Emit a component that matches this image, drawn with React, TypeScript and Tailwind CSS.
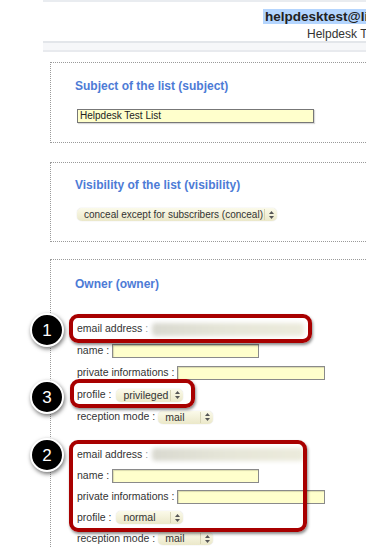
import React from 'react';

function Select({ text, width, size = 'text-[10.5px]' }: { text: string; width: string; size?: string }) {
  return (
    <div
      className={`${width} ${size} h-[13px] flex items-center rounded-[5px] bg-gradient-to-b from-[#fbfaea] to-[#ebe8c9] shadow-[0_0_1px_rgba(0,0,0,0.25)] leading-[13px] text-[#333]`}
    >
      <span className="flex-1 pl-[7px] whitespace-nowrap overflow-hidden">{text}</span>
      <span className="w-[13px] h-[11px] border-l border-[#d6d3b4] flex items-center justify-center">
        <svg width="5" height="8" viewBox="0 0 5 8">
          <path d="M2.5 0 L5 3 L0 3 Z" fill="#555" />
          <path d="M2.5 8 L5 5 L0 5 Z" fill="#555" />
        </svg>
      </span>
    </div>
  );
}

function TextInput({ width }: { width: string }) {
  return (
    <div
      className={`${width} h-[14px] border border-[#8a8a8a] bg-[#ffffcc] shadow-[inset_1px_1px_1px_rgba(0,0,0,0.15)]`}
    />
  );
}

function BlurValue() {
  return (
    <div className="ml-[4px] w-[152px] h-[13px] rounded-[4px] bg-gradient-to-r from-[#d9d9d0] via-[#e6e6d8] to-[#ecebdc] blur-[2px]" />
  );
}

function OwnerRows({ profile, rowHeight }: { profile: string; rowHeight: string }) {
  return (
    <div className="flex flex-col">
      <div className={`${rowHeight} flex items-center`}>
        <span>email address</span>
        <span className="text-[#999]">&nbsp;:</span>
        <BlurValue />
      </div>
      <div className={`${rowHeight} flex items-center gap-[3px]`}>
        <span>name :</span>
        <TextInput width="w-[147px]" />
      </div>
      <div className={`${rowHeight} flex items-center gap-[3px]`}>
        <span>private informations :</span>
        <TextInput width="w-[148px]" />
      </div>
      <div className={`${rowHeight} flex items-center gap-[5px]`}>
        <span>profile :</span>
        <Select text={profile} width="w-[67px]" />
      </div>
      <div className={`${rowHeight} flex items-center gap-[3px]`}>
        <span>reception mode :</span>
        <Select text="mail" width="w-[55px]" />
      </div>
    </div>
  );
}

function Marker({ n, top }: { n: string; top: string }) {
  return (
    <div
      className={`absolute left-[30px] ${top} w-[34px] h-[34px] rounded-full bg-black border-2 border-white shadow-[1px_2px_4px_rgba(0,0,0,0.55)] flex items-center justify-center text-white text-[17px] leading-none`}
    >
      {n}
    </div>
  );
}

export default function App() {
  return (
    <div className="relative w-[366px] h-[547px] overflow-hidden bg-white font-['Liberation_Sans',Arial,sans-serif] text-[#333]">
      {/* header */}
      <div className="ml-[43px] h-[2px] bg-[#e9ecf0]" />
      <div className="h-[39px] pt-[2px] whitespace-nowrap">
        <div className="pl-[263px]">
          <span className="bg-[#b4d5fe] px-[2px] text-[13.5px] leading-[18px] font-bold text-[#222]">
            helpdesktest@lists.example.org
          </span>
        </div>
        <div className="pl-[307px] text-[12px] leading-[13px] text-[#333]">Helpdesk Test List</div>
      </div>
      <div className="ml-[43px] h-[2px] bg-[#e3e6ea]" />
      <div className="ml-[43px] h-[7px] bg-[#f6f7f9]" />
      <div className="ml-[43px] h-[2px] bg-[#e8eaee]" />

      <div className="pl-[50px]">
        {/* subject */}
        <div className="mt-[10px] w-[340px] h-[81px] border border-dotted border-[#9a9a9a] pl-[24px] pt-[16px]">
          <div className="text-[12px] leading-[15px] font-bold text-[#4d7bd6]">Subject of the list (subject)</div>
          <div className="mt-[15px] ml-[2px] w-[237px] h-[14px] border border-[#777] bg-[#ffffcc] shadow-[1px_1px_1px_rgba(0,0,0,0.15)] pl-[2px] text-[10px] leading-[12px] text-[#222]">
            Helpdesk Test List
          </div>
        </div>

        {/* visibility */}
        <div className="mt-[19px] w-[340px] h-[80px] border border-dotted border-[#9a9a9a] pl-[24px] pt-[15px]">
          <div className="text-[12px] leading-[15px] font-bold text-[#4d7bd6]">Visibility of the list (visibility)</div>
          <div className="mt-[15px] ml-[2px]">
            <Select text="conceal except for subscribers (conceal)" width="w-[200px]" size="text-[10px]" />
          </div>
        </div>

        {/* owner */}
        <div className="mt-[17px] w-[340px] h-[320px] border border-dotted border-[#9a9a9a] pl-[24px] pt-[17px] text-[10.5px]">
          <div className="text-[12px] leading-[15px] font-bold text-[#4d7bd6]">Owner (owner)</div>
          <div className="mt-[26px] ml-[2px]">
            <OwnerRows profile="privileged" rowHeight="h-[22px]" />
          </div>
          <div className="mt-[16px] ml-[2px]">
            <OwnerRows profile="normal" rowHeight="h-[21px]" />
          </div>
        </div>
      </div>

      {/* annotation overlays */}
      <div className="absolute left-[69px] top-[314px] w-[243px] h-[29px] rounded-[9px] border-[4px] border-[#a80000] shadow-[1px_2px_3px_rgba(0,0,0,0.45)]" />
      <div className="absolute left-[70px] top-[379px] w-[125px] h-[29px] rounded-[9px] border-[4px] border-[#a80000] shadow-[1px_2px_3px_rgba(0,0,0,0.45)]" />
      <div className="absolute left-[69px] top-[440px] w-[238px] h-[92px] rounded-[9px] border-[4px] border-[#a80000] shadow-[1px_2px_3px_rgba(0,0,0,0.45)]" />

      <Marker n="1" top="top-[313px]" />
      <Marker n="3" top="top-[380px]" />
      <Marker n="2" top="top-[438px]" />
    </div>
  );
}
